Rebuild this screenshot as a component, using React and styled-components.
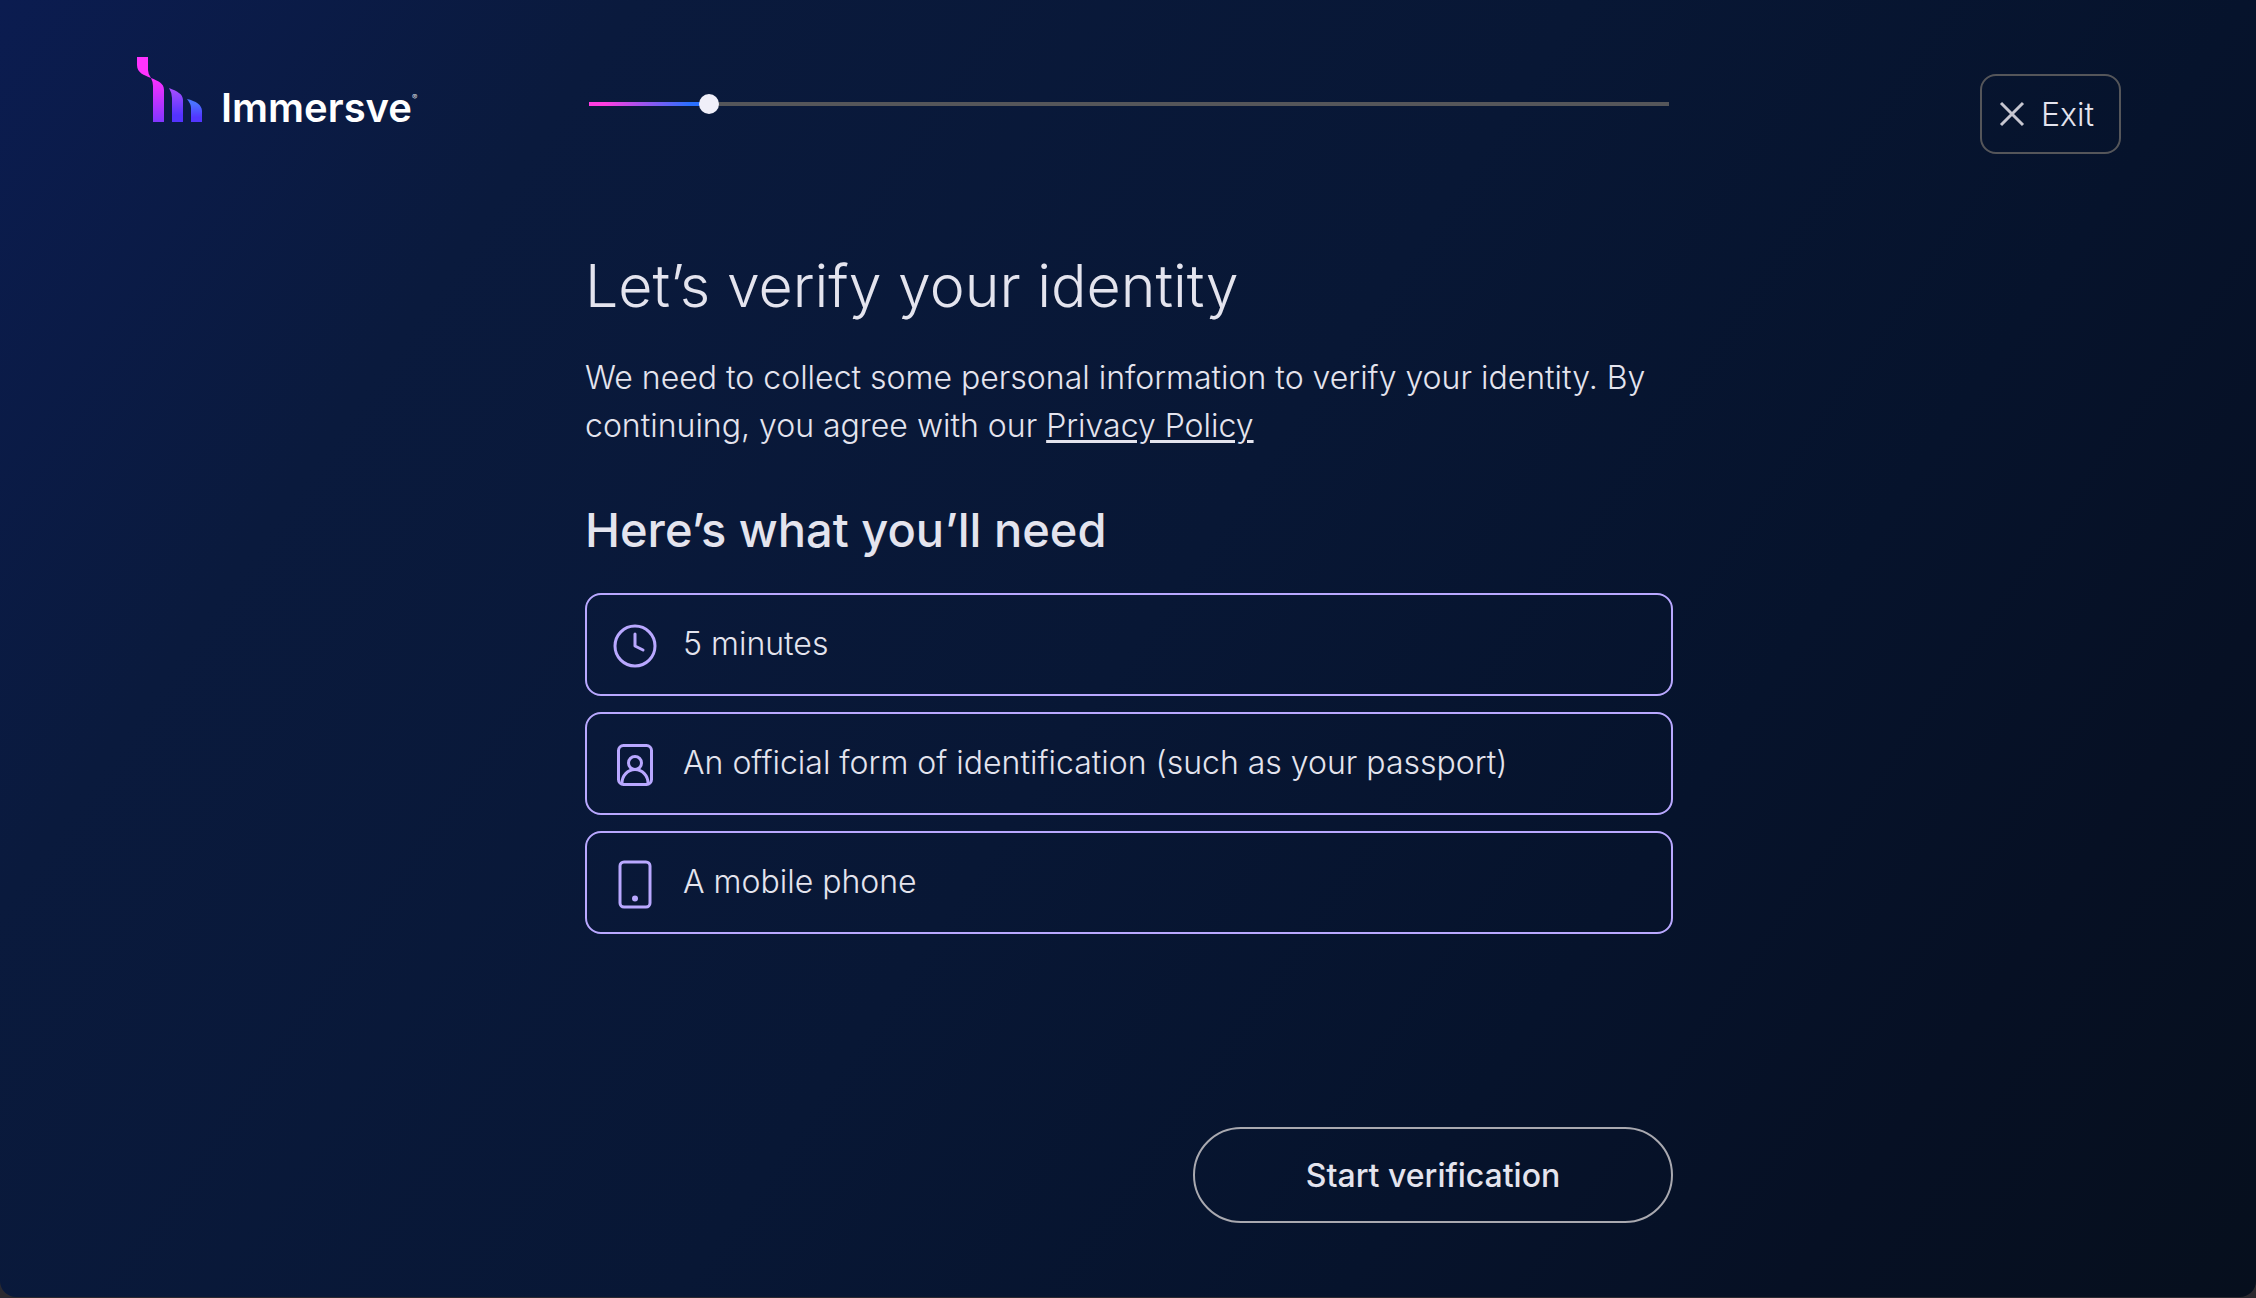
import React, { useState } from "react";
import styled, { createGlobalStyle } from "styled-components";

const GlobalStyle = createGlobalStyle`
  *, *::before, *::after { box-sizing: border-box; }
  body {
    margin: 0;
    background: #2b2a30;
    color: #e4e4ee;
    font-family: Inter, "Liberation Sans", sans-serif;
    font-size: 32px;
    font-weight: 300;
  }
`;

const Page = styled.div`
  min-height: calc(100vh - 1px);
  padding: 56px 135px 74px 137px;
  display: flex;
  flex-direction: column;
  border-radius: 0 0 16px 16px;
  background: linear-gradient(125deg, #0b1c50 0%, #0a1a3d 20%, #081735 50%, #06132c 71%, #061024 85%, #060f1d 100%);
`;

const Row = styled.div`
  display: grid;
  grid-template-columns: minmax(0, 1fr) minmax(0, 1088px) minmax(0, 1fr);
`;

const Header = styled(Row).attrs({ as: "header" })`
  align-items: start;
`;

const Brand = styled.a`
  display: flex;
  align-items: flex-end;
  justify-self: start;
  color: #fff;
  text-decoration: none;
`;

const BrandMark = styled.svg`
  width: 68px;
  height: 66px;
  margin-right: 16px;
`;

const BrandName = styled.span`
  font-size: 40px;
  font-weight: 600;
  line-height: 28px;
`;

const Registered = styled.span`
  align-self: center;
  padding-top: 16px;
  font-size: 8px;
  line-height: 8px;
`;

const Progress = styled.input`
  appearance: none;
  height: 20px;
  margin: 38px 4px 0;
  background: transparent;

  &::-webkit-slider-runnable-track {
    height: 4px;
    background: linear-gradient(90deg, #ff3de0 0, #ff3de0 14%, #2970ff 90%) 0 0 / ${(p) => p.$filled}% 100% no-repeat #55565a;
  }
  &::-webkit-slider-thumb {
    appearance: none;
    width: 20px;
    height: 20px;
    margin-top: -8px;
    border-radius: 50%;
    background: #f0eff9;
  }
`;

const ExitButton = styled.button`
  justify-self: end;
  display: flex;
  align-items: center;
  gap: 16px;
  height: 80px;
  margin-top: 18px;
  padding: 0 25px 0 17px;
  border: 2px solid #55565a;
  border-radius: 16px;
  background: transparent;
  color: inherit;
  font: inherit;
`;

const CloseIcon = styled.svg`
  width: 26px;
  height: 26px;
`;

const Body = styled(Row).attrs({ as: "main" })`
  flex: 1;
`;

const Content = styled.div`
  grid-column: 2;
  display: flex;
  flex-direction: column;
`;

const Title = styled.h1`
  margin: 96px 0 0;
  font-size: 59px;
  font-weight: 300;
  line-height: 72px;
`;

const Intro = styled.p`
  margin: 32px 0 0;
  line-height: 48px;
`;

const PolicyLink = styled.a`
  color: inherit;
  text-decoration-thickness: 3px;
  text-underline-offset: 3px;
`;

const Subtitle = styled.h2`
  margin: 48px 0 0;
  font-size: 47px;
  font-weight: 500;
  line-height: 63px;
`;

const Needs = styled.ul`
  display: flex;
  flex-direction: column;
  gap: 16px;
  margin: 32px 0 0;
  padding: 0;
  list-style: none;
`;

const Need = styled.li`
  display: flex;
  align-items: center;
  gap: 24px;
  padding: 23px 24px 25px;
  border: 2px solid #b9a8ff;
  border-radius: 16px;
  line-height: 51px;
`;

const NeedIcon = styled.svg`
  flex: none;
  width: 48px;
  height: 48px;
  overflow: visible;
  fill: none;
  stroke: #b9a8ff;
  stroke-width: 3;
  stroke-linecap: round;
  stroke-linejoin: round;
`;

const StartButton = styled.button`
  align-self: flex-end;
  width: 480px;
  height: 96px;
  margin-top: auto;
  border: 2px solid #a9a9b0;
  border-radius: 48px;
  background: transparent;
  color: inherit;
  font: inherit;
  font-weight: 500;
`;

const ClockIcon = () => (
  <NeedIcon viewBox="0 0 48 48" aria-hidden="true">
    <circle cx="24" cy="26" r="20" />
    <path d="M24 14v12l8 4" />
  </NeedIcon>
);

const IdIcon = () => (
  <NeedIcon viewBox="0 0 48 48" aria-hidden="true">
    <rect x="7.5" y="6.5" width="33" height="39" rx="5" />
    <circle cx="24" cy="24" r="6.5" />
    <path d="M11 44c0-7 5.5-13.500 13-13.500S37 37 37 44" />
  </NeedIcon>
);

const PhoneIcon = () => (
  <NeedIcon viewBox="0 0 48 48" aria-hidden="true">
    <rect x="9" y="4" width="30" height="45" rx="4" />
    <circle cx="24" cy="40.5" r="1.5" fill="#b9a8ff" />
  </NeedIcon>
);

const NEEDS = [
  { Icon: ClockIcon, text: "5 minutes" },
  { Icon: IdIcon, text: "An official form of identification (such as your passport)" },
  { Icon: PhoneIcon, text: "A mobile phone" },
];

const Logo = () => (
  <Brand href="#" aria-label="Immersve">
    <BrandMark viewBox="0 0 68 66" aria-hidden="true">
      <defs>
        <linearGradient id="bar1" x1="0" y1="0" x2="0" y2="1">
          <stop offset="0" stopColor="#ff2fff" />
          <stop offset="1" stopColor="#8136ff" />
        </linearGradient>
        <linearGradient id="bar2" x1="0" y1="0" x2="0" y2="1">
          <stop offset="0" stopColor="#a94fff" />
          <stop offset="0.8" stopColor="#5333ff" />
        </linearGradient>
        <linearGradient id="bar3" x1="0" y1="0" x2="0" y2="1">
          <stop offset="0.2" stopColor="#4b73ff" />
          <stop offset="0.8" stopColor="#5236ff" />
        </linearGradient>
      </defs>
      <path d="M0 1H11V14Q11 18 14 22C7 19 0 17 0 9Z" fill="#ff33ff" />
      <path d="M14 22C21 25 27 27 27 34V66H16V30Q16 26 14 22Z" fill="url(#bar1)" />
      <path d="M32 32C40 35 46 38 46 44V66H35V42Q35 37 32 32Z" fill="url(#bar2)" />
      <path d="M50 43C59 45 65 49 65 55V66H54V52Q54 48 50 43Z" fill="url(#bar3)" />
    </BrandMark>
    <BrandName>Immersve</BrandName>
    <Registered>®</Registered>
  </Brand>
);

export default function App() {
  const [step, setStep] = useState(10.4);
  return (
    <>
      <GlobalStyle />
      <Page>
        <Header>
          <Logo />
          <Progress
            type="range"
            min="0"
            max="100"
            step="0.1"
            value={step}
            $filled={step}
            onChange={(e) => setStep(Number(e.target.value))}
            aria-label="Verification progress"
          />
          <ExitButton type="button">
            <CloseIcon viewBox="0 0 26 26" fill="none" stroke="#c6c6d0" strokeWidth="3" aria-hidden="true">
              <path d="M2 2L24 24M24 2L2 24" />
            </CloseIcon>
            Exit
          </ExitButton>
        </Header>
        <Body>
          <Content>
            <Title>Let’s verify your identity</Title>
            <Intro>
              We need to collect some personal information to verify your identity. By continuing, you agree with our{" "}
              <PolicyLink href="#privacy">Privacy Policy</PolicyLink>
            </Intro>
            <Subtitle>Here’s what you’ll need</Subtitle>
            <Needs>
              {NEEDS.map(({ Icon, text }) => (
                <Need key={text}>
                  <Icon />
                  {text}
                </Need>
              ))}
            </Needs>
            <StartButton type="button">Start verification</StartButton>
          </Content>
        </Body>
      </Page>
    </>
  );
}
